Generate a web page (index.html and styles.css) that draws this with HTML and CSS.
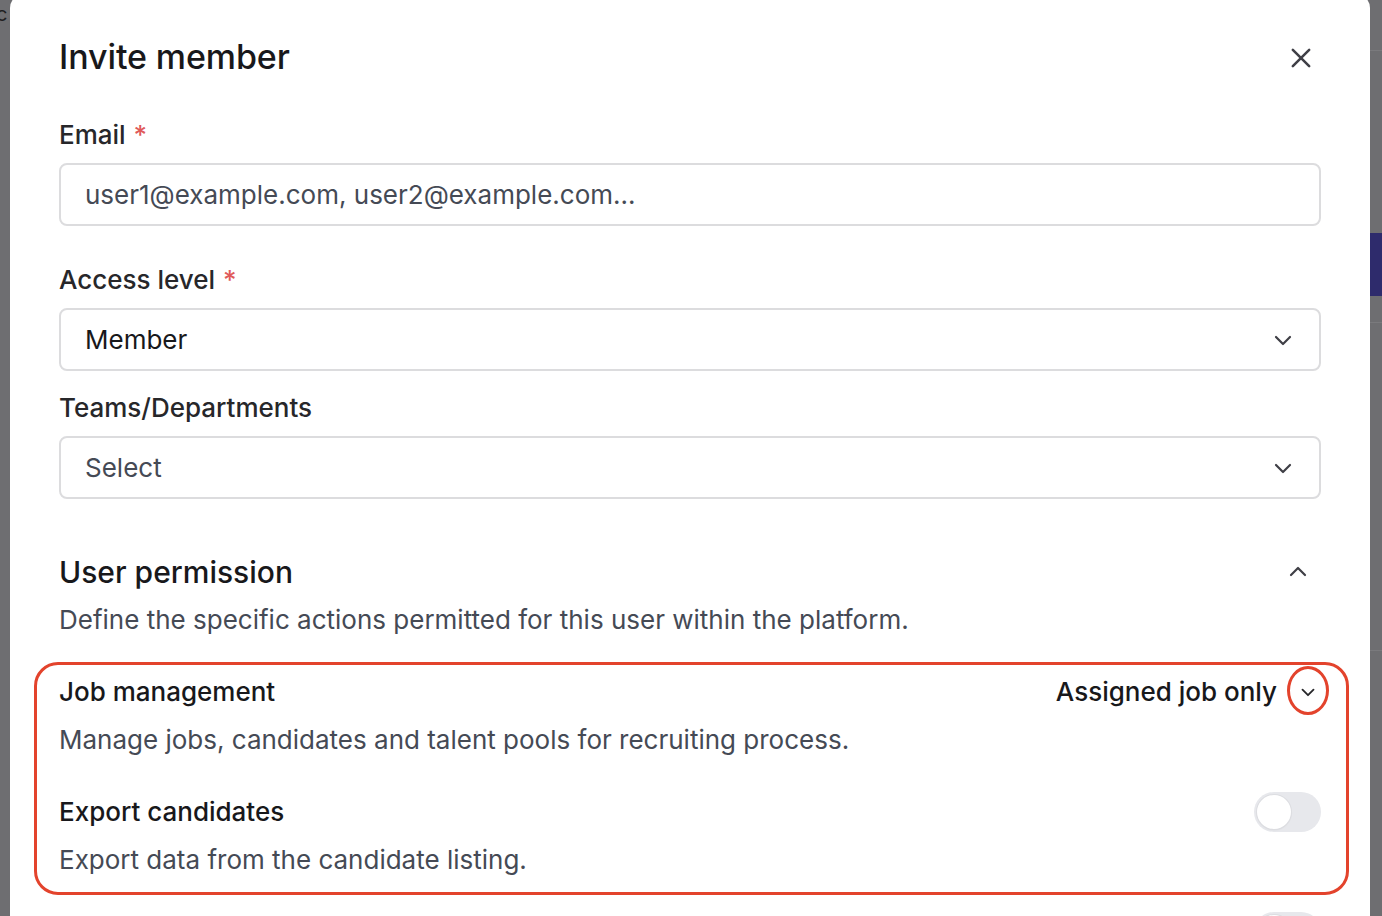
FILE: index.html
```html
<!DOCTYPE html>
<html lang="en">
<head>
<meta charset="utf-8">
<title>Invite member</title>
<link rel="stylesheet" href="styles.css">
</head>
<body>
<div class="screen">
  <div class="backdrop-left"><span class="bg-letter">c</span></div>
  <div class="modal">
    <div class="modal-header">
      <h1 class="modal-title">Invite member</h1>
      <button class="icon-btn close-btn" aria-label="Close">
        <svg viewBox="0 0 24 24" width="28" height="28"><path d="M5 5L19 19M19 5L5 19" fill="none" stroke="#3f3f46" stroke-width="2.2" stroke-linecap="round"/></svg>
      </button>
    </div>

    <div class="field field-email">
      <label class="field-label">Email <span class="req">*</span></label>
      <div class="input"><span class="placeholder">user1@example.com, user2@example.com...</span></div>
    </div>

    <div class="field field-access">
      <label class="field-label">Access level <span class="req">*</span></label>
      <div class="input select">
        <span class="value">Member</span>
        <svg class="chev" viewBox="0 0 24 24" width="24" height="24"><path d="M5 9l7 7 7-7" fill="none" stroke="#3f3f46" stroke-width="2.2" stroke-linecap="round" stroke-linejoin="round"/></svg>
      </div>
    </div>

    <div class="field field-teams">
      <label class="field-label">Teams/Departments</label>
      <div class="input select">
        <span class="placeholder">Select</span>
        <svg class="chev" viewBox="0 0 24 24" width="24" height="24"><path d="M5 9l7 7 7-7" fill="none" stroke="#3f3f46" stroke-width="2.2" stroke-linecap="round" stroke-linejoin="round"/></svg>
      </div>
    </div>

    <div class="section-head">
      <h2 class="section-title">User permission</h2>
      <svg class="chev-up" viewBox="0 0 24 24" width="24" height="24"><path d="M5 15l7-7 7 7" fill="none" stroke="#3f3f46" stroke-width="2.2" stroke-linecap="round" stroke-linejoin="round"/></svg>
    </div>
    <p class="section-desc">Define the specific actions permitted for this user within the platform.</p>

    <div class="perm-list">
      <div class="highlight-box"></div>
      <div class="perm">
        <div class="perm-row">
          <span class="perm-title">Job management</span>
          <div class="perm-control">
            <span class="perm-value">Assigned job only</span>
            <span class="dd-btn">
              <svg viewBox="0 0 24 24" width="22" height="22"><path d="M6 9.5l6 6 6-6" fill="none" stroke="#27272a" stroke-width="2" stroke-linecap="round" stroke-linejoin="round"/></svg>
              <span class="highlight-ring"></span>
            </span>
          </div>
        </div>
        <p class="perm-desc">Manage jobs, candidates and talent pools for recruiting process.</p>
      </div>
      <div class="perm">
        <div class="perm-row">
          <span class="perm-title">Export candidates</span>
          <span class="toggle"><span class="knob"></span></span>
        </div>
        <p class="perm-desc">Export data from the candidate listing.</p>
      </div>
    </div>
    <div class="perm perm-next">
      <div class="perm-row">
        <span class="perm-title">&nbsp;</span>
        <span class="toggle"><span class="knob"></span></span>
      </div>
    </div>
  </div>
  <div class="backdrop-right">
    <div class="bg-line l1"></div>
    <div class="bg-block"></div>
    <div class="bg-line l2"></div>
    <div class="bg-line l3"></div>
  </div>
</div>
</body>
</html>
```

FILE: styles.css
```css
* { box-sizing: border-box; }
html, body {
  margin: 0;
  padding: 0;
  height: 100%;
  overflow: hidden;
  background: #6e6e71;
  font-family: Inter, "Noto Sans", "Liberation Sans", sans-serif;
}
.screen {
  display: flex;
  width: 1382px;
  height: 916px;
  overflow: hidden;
}
.backdrop-left {
  width: 10px;
  flex: none;
  background: #6e6e71;
  position: relative;
  overflow: hidden;
}
.bg-letter {
  display: block;
  margin-left: -4px;
  margin-top: 2px;
  font-size: 20px;
  line-height: 24px;
  color: #1f1f22;
}
.backdrop-right {
  width: 12px;
  flex: none;
  background: #6e6e71;
  display: flex;
  flex-direction: column;
}
.bg-line { height: 1px; background: #7a7a7d; }
.bg-line.l1 { margin-top: 50px; }
.bg-block { margin-top: 182px; height: 63px; background: #2e2b6c; }
.bg-line.l2 { margin-top: 26px; }
.bg-line.l3 { margin-top: 327px; }

.modal {
  width: 1360px;
  flex: none;
  background: #ffffff;
  margin-top: -6px;
  height: 940px;
  border-radius: 14px 14px 0 0;
  padding: 41px 49px 0 49px;
}
.modal-header {
  display: flex;
  align-items: center;
  justify-content: space-between;
  height: 44px;
}
.modal-title {
  margin: 0;
  font-size: 34px;
  line-height: 44px;
  font-weight: 500;
  color: #18181b;
  letter-spacing: -0.1px;
}
.icon-btn {
  border: 0;
  background: none;
  padding: 0;
  display: flex;
  align-items: center;
  justify-content: center;
}
.close-btn {
  width: 34px;
  height: 34px;
  margin-right: 3px;
  margin-top: 2px;
}

.field { display: flex; flex-direction: column; }
.field-email { margin-top: 40px; }
.field-access { margin-top: 38px; }
.field-teams { margin-top: 21px; }
.field-label {
  font-size: 26px;
  line-height: 32px;
  font-weight: 500;
  color: #27272a;
  margin-bottom: 12px;
}
.req { color: #e05a5a; margin-left: 1px; }
.input {
  height: 63px;
  border: 2px solid #dcdcde;
  border-radius: 8px;
  display: flex;
  align-items: center;
  padding: 0 25px 0 24px;
  font-size: 26px;
  color: #18181b;
}
.placeholder { color: #454a55; }
.value { color: #18181b; }
.select { justify-content: space-between; }
.chev { margin-right: -1px; }

.section-head {
  margin-top: 53px;
  display: flex;
  align-items: center;
  justify-content: space-between;
  height: 40px;
}
.section-title {
  margin: 0;
  font-size: 30px;
  line-height: 40px;
  font-weight: 500;
  color: #18181b;
}
.chev-up { margin-right: 11px; margin-top: 0; }
.section-desc {
  margin: 12px 0 0;
  font-size: 26px;
  line-height: 32px;
  color: #454a55;
}

.perm-list { position: relative; margin-top: 40px; }
.highlight-box {
  position: absolute;
  top: -14px;
  left: -25px;
  right: -28px;
  bottom: -19px;
  border: 3px solid #e3432c;
  border-radius: 24px;
  pointer-events: none;
}
.perm + .perm { margin-top: 40px; }
.perm-row {
  display: flex;
  align-items: center;
  justify-content: space-between;
  height: 32px;
}
.perm-title {
  font-size: 26px;
  line-height: 32px;
  font-weight: 500;
  color: #18181b;
}
.perm-control { display: flex; align-items: center; gap: 19px; }
.perm-value {
  font-size: 26px;
  line-height: 32px;
  font-weight: 500;
  color: #18181b;
}
.dd-btn {
  position: relative;
  width: 24px;
  height: 24px;
  display: flex;
  align-items: center;
  justify-content: center;
  margin-right: 1px;
}
.highlight-ring {
  position: absolute;
  left: -9px;
  top: -14px;
  width: 42px;
  height: 49px;
  border: 3px solid #e3432c;
  border-radius: 50%;
}
.perm-desc {
  margin: 16px 0 0;
  font-size: 26px;
  line-height: 32px;
  color: #454a55;
}
.toggle {
  width: 67px;
  height: 40px;
  border-radius: 20px;
  background: #e7e8ec;
  display: flex;
  align-items: center;
  padding: 3px;
}
.knob {
  width: 34px;
  height: 34px;
  border-radius: 50%;
  background: #ffffff;
  box-shadow: 0 0 0 1px #dcdde1, 0 1px 2px rgba(0,0,0,0.08);
}
.perm-next { margin-top: 40px; }
```
